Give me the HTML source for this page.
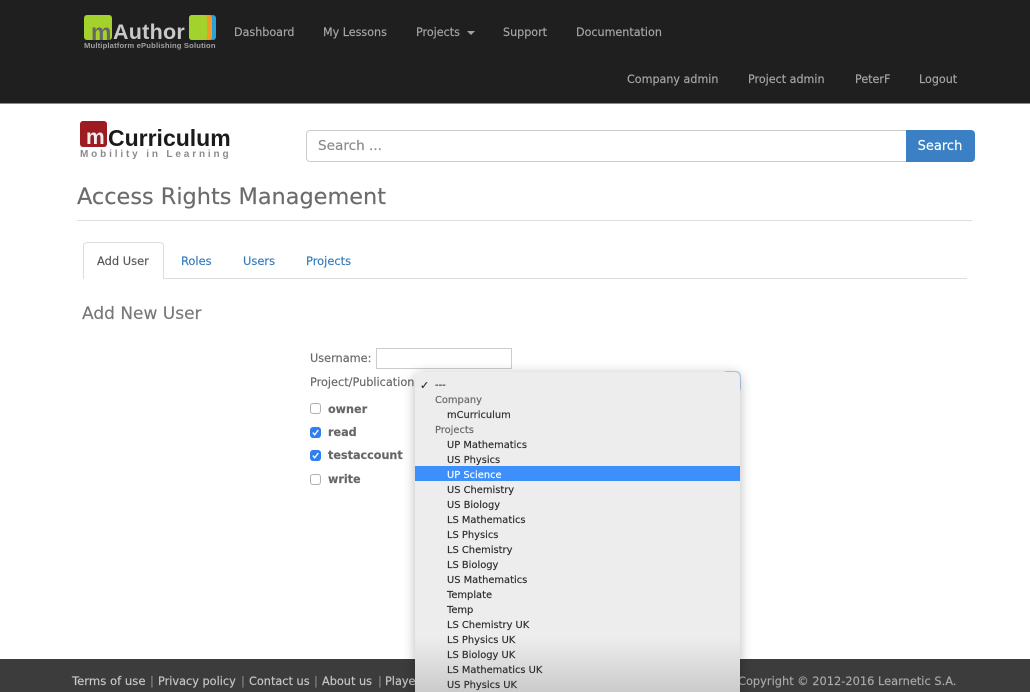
<!DOCTYPE html>
<html><head><meta charset="utf-8"><title>Access Rights Management</title>
<style>
html,body{margin:0;padding:0;width:1030px;height:692px;overflow:hidden;background:#fff}
#p{position:relative;width:1030px;height:692px;overflow:hidden;font-family:"DejaVu Sans","Liberation Sans",sans-serif;filter:blur(.35px);-webkit-text-stroke:.15px}
.a{position:absolute;white-space:nowrap;line-height:16px}
.n{color:#a8a8a8;font-size:11.15px}
.f{color:#c8c8c8;font-size:11.3px;top:674px}
.v{color:#888;font-size:11.65px;top:673px}
.t{color:#337ab7;font-size:11.45px}
.b{color:#666;font-size:11.2px;font-weight:bold}
.l{color:#666;font-size:11.3px}
.i{position:absolute;left:32px;color:#2a2a2a;font-size:9.9px;line-height:15px;white-space:nowrap;margin-top:1.5px}
.g{left:20px;color:#666}
.c{position:absolute;left:310px;width:11px;height:11px;border-radius:3px;box-sizing:border-box}
.off{background:#fff;border:1px solid #b0b0b0}
.on{background:#2f7ff0}
.on svg{position:absolute;left:0;top:0}
</style></head><body><div id="p">
<div class="a" style="left:0;top:0;width:1030px;height:103px;background:#1f1f1f;border-bottom:1px solid #8a8a8a"></div>

<!-- mAuthor logo -->
<div class="a" style="left:84px;top:15px;width:28px;height:25px;background:#a4d22d;border-radius:3px"></div>
<div class="a" style="left:91px;top:20px;font:bold 23px/24px 'Liberation Sans',sans-serif;color:#666;-webkit-text-stroke:0">m</div>
<div class="a" style="left:113px;top:20px;font:bold 21.5px/24px 'Liberation Sans',sans-serif;letter-spacing:.25px;color:#c9c9c9;-webkit-text-stroke:0">Author</div>
<div class="a" style="left:189px;top:15px;width:27px;height:25px;background:#2e9fd8;border-radius:3px"></div>
<div class="a" style="left:189px;top:15px;width:23px;height:25px;background:#f39a26;border-radius:3px"></div>
<div class="a" style="left:189px;top:15px;width:18px;height:25px;background:#a4d22d;border-radius:3px"></div>
<div class="a" style="left:84px;top:39px;font:bold 7.65px/14px 'Liberation Sans',sans-serif;color:#a0a0a0;letter-spacing:.02em;-webkit-text-stroke:0">Multiplatform ePublishing Solution</div>

<div class="a n" style="left:234px;top:25px">Dashboard</div>
<div class="a n" style="left:323px;top:25px">My Lessons</div>
<div class="a n" style="left:416px;top:25px">Projects</div>
<div class="a" style="left:467px;top:31px;width:0;height:0;border-left:4px solid transparent;border-right:4px solid transparent;border-top:4px solid #a3a3a3"></div>
<div class="a n" style="left:503px;top:25px">Support</div>
<div class="a n" style="left:576px;top:25px">Documentation</div>
<div class="a n" style="left:627px;top:72px">Company admin</div>
<div class="a n" style="left:748px;top:72px">Project admin</div>
<div class="a n" style="left:855px;top:72px">PeterF</div>
<div class="a n" style="left:919px;top:72px">Logout</div>

<!-- mCurriculum logo -->
<div class="a" style="left:80px;top:121px;width:27px;height:26px;background:#9e1b22;border-radius:3px"></div>
<div class="a" style="left:86px;top:127px;font:bold 21px/22px 'Liberation Sans',sans-serif;color:#eee;-webkit-text-stroke:0">m</div>
<div class="a" style="left:108px;top:125px;font:bold 23px/26px 'Liberation Sans',sans-serif;color:#1a1a1a;-webkit-text-stroke:0">Curriculum</div>
<div class="a" style="left:80px;top:148px;font:bold 10px/14px 'Liberation Sans',sans-serif;color:#8c8c8c;letter-spacing:2.85px;-webkit-text-stroke:0">Mobility in Learning</div>

<!-- Search -->
<div class="a" style="left:306px;top:130px;width:601px;height:32px;box-sizing:border-box;border:1px solid #ccc;border-radius:4px 0 0 4px;background:#fff"></div>
<div class="a" style="left:318px;top:137px;font-size:13.6px;line-height:18px;color:#888">Search ...</div>
<div class="a" style="left:906px;top:130px;width:68px;height:32px;padding-right:1px;background:#3b80c4;border-radius:0 4px 4px 0;color:#fff;font-size:13px;line-height:34px;text-align:center">Search</div>

<h1 class="a" style="left:77px;top:183px;margin:0;font-size:22.4px;font-weight:normal;line-height:28px;color:#6b6b6b">Access Rights Management</h1>
<div class="a" style="left:77px;top:220px;width:895px;height:1px;background:#ddd"></div>

<!-- Tabs -->
<div class="a" style="left:83px;top:278px;width:884px;height:1px;background:#ddd"></div>
<div class="a" style="left:83px;top:242px;width:81px;height:37px;box-sizing:border-box;border:1px solid #ddd;border-bottom:0;border-radius:4px 4px 0 0;background:#fff"></div>
<div class="a" style="left:97px;top:253px;font-size:11.45px;color:#555">Add User</div>
<div class="a t" style="left:181px;top:253px">Roles</div>
<div class="a t" style="left:243px;top:253px">Users</div>
<div class="a t" style="left:306px;top:253px">Projects</div>

<h2 class="a" style="left:82px;top:304px;margin:0;font-size:17px;font-weight:normal;line-height:20px;color:#777">Add New User</h2>

<!-- Form -->
<div class="a l" style="left:310px;top:351px">Username:</div>
<div class="a" style="left:376px;top:348px;width:136px;height:21px;box-sizing:border-box;border:1px solid #ccc;background:#fff"></div>
<div class="a l" style="left:310px;top:375px">Project/Publication</div>
<div class="c off" style="top:403px"></div>
<div class="a b" style="left:328px;top:402px">owner</div>
<div class="c on" style="top:427px"><svg width="11" height="11" viewBox="0 0 11 11"><path d="M2.8 5.6 4.7 7.8 8.3 3" fill="none" stroke="#fff" stroke-width="1.4"/></svg></div>
<div class="a b" style="left:328px;top:425px">read</div>
<div class="c on" style="top:450px"><svg width="11" height="11" viewBox="0 0 11 11"><path d="M2.8 5.6 4.7 7.8 8.3 3" fill="none" stroke="#fff" stroke-width="1.4"/></svg></div>
<div class="a b" style="left:328px;top:448px">testaccount</div>
<div class="c off" style="top:474px"></div>
<div class="a b" style="left:328px;top:472px">write</div>
<div class="a" style="left:722px;top:371px;width:19px;height:22px;background:#b5d0ee;border-radius:5px"></div>

<!-- Footer -->
<div class="a" style="left:0;top:659px;width:1030px;height:33px;background:#3c3c3c"></div>
<div class="a f" style="left:72px;top:673px;font-size:11.65px">Terms of use</div>
<div class="a v" style="left:150px">|</div>
<div class="a f" style="left:158px">Privacy policy</div>
<div class="a v" style="left:241px">|</div>
<div class="a f" style="left:249px">Contact us</div>
<div class="a v" style="left:314px">|</div>
<div class="a f" style="left:322px">About us</div>
<div class="a v" style="left:378px">|</div>
<div class="a f" style="left:385px">Player</div>
<div class="a f" style="left:738px;top:673px;font-size:11.4px;color:#aaa">Copyright © 2012-2016 Learnetic S.A.</div>

<!-- Dropdown -->
<div class="a" style="left:415px;top:372px;width:325px;height:330px;background:linear-gradient(#ededed 0,#ededed 265px,#c8c8c8 325px);border-radius:5px 5px 0 0;box-shadow:0 2px 12px rgba(0,0,0,.28);overflow:hidden">
<div class="i" style="left:5px;top:4px;font-size:11px;font-weight:bold">✓</div>
<div class="i" style="left:20px;top:4px">---</div>
<div class="i g" style="top:19px">Company</div>
<div class="i" style="top:34px">mCurriculum</div>
<div class="i g" style="top:49px">Projects</div>
<div class="i" style="top:64px">UP Mathematics</div>
<div class="i" style="top:79px">US Physics</div>
<div class="a" style="left:0;top:94px;width:325px;height:15px;background:#3d90fb"></div>
<div class="i" style="top:94px;color:#fff">UP Science</div>
<div class="i" style="top:109px">US Chemistry</div>
<div class="i" style="top:124px">US Biology</div>
<div class="i" style="top:139px">LS Mathematics</div>
<div class="i" style="top:154px">LS Physics</div>
<div class="i" style="top:169px">LS Chemistry</div>
<div class="i" style="top:184px">LS Biology</div>
<div class="i" style="top:199px">US Mathematics</div>
<div class="i" style="top:214px">Template</div>
<div class="i" style="top:229px">Temp</div>
<div class="i" style="top:244px">LS Chemistry UK</div>
<div class="i" style="top:259px">LS Physics UK</div>
<div class="i" style="top:274px">LS Biology UK</div>
<div class="i" style="top:289px">LS Mathematics UK</div>
<div class="i" style="top:304px">US Physics UK</div>
</div>
</div></body></html>
